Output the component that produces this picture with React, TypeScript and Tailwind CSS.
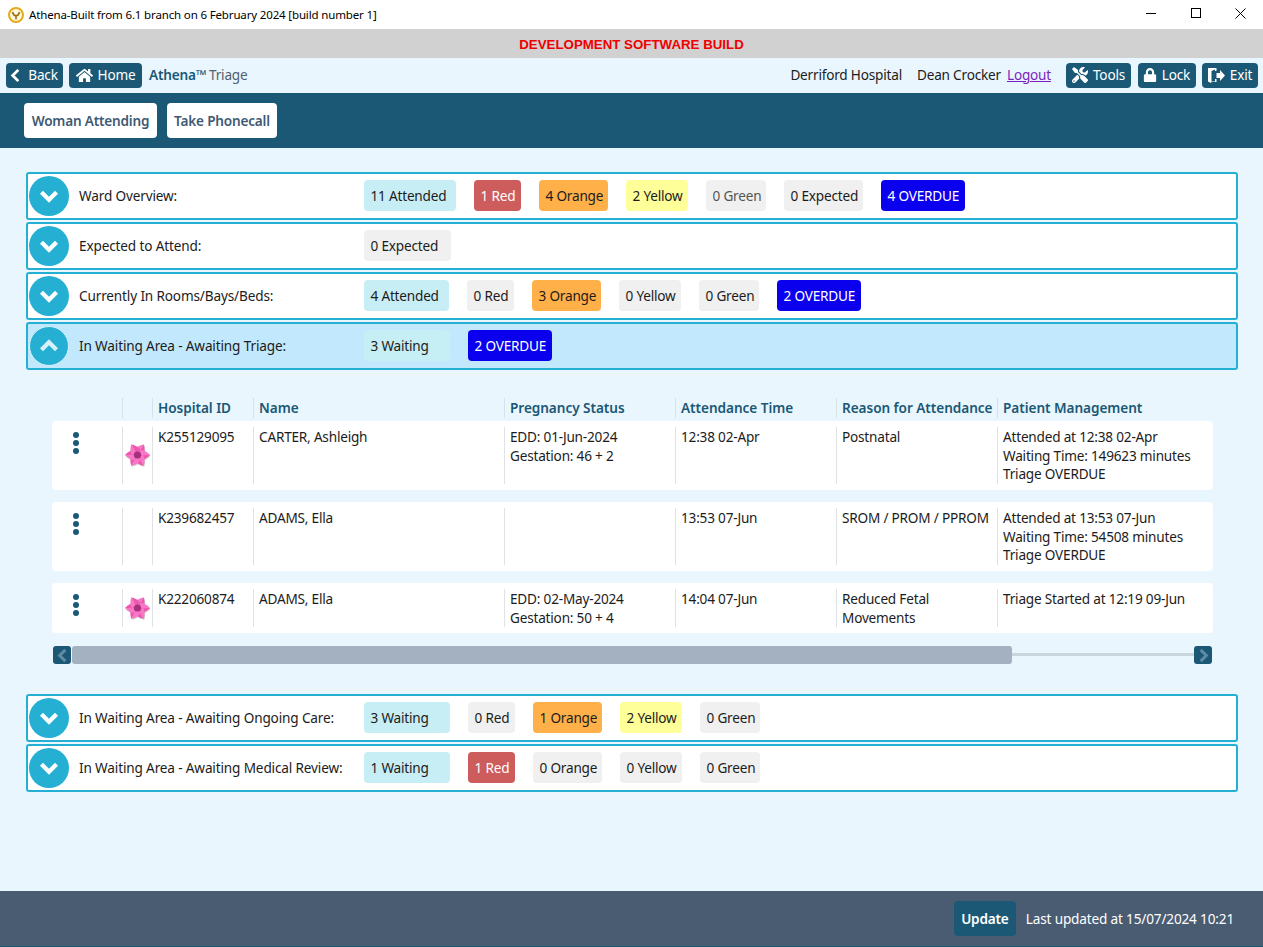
import React from 'react';
import { FaHome, FaTools, FaLock } from 'react-icons/fa';

type ChipKind = 'teal' | 'red' | 'orange' | 'yellow' | 'grey' | 'blue' | 'faint' | 'mint';

interface Chip {
  label: string;
  kind: ChipKind;
  width: string;
}

const chipStyles: Record<ChipKind, string> = {
  teal: 'bg-[#c8eef5] text-[#1c1c1c]',
  mint: 'bg-[#c6eef5] text-[#1c1c1c]',
  red: 'bg-[#cd5c5c] text-white',
  orange: 'bg-[#ffb048] text-[#1c1c1c]',
  yellow: 'bg-[#ffff99] text-[#1c1c1c]',
  grey: 'bg-[#f0f0f0] text-[#1c1c1c]',
  faint: 'bg-[#f0f0f0] text-[#555555]',
  blue: 'bg-[#0a00ee] text-white',
};

const Chevron = ({ dir, size, weight = 3.4 }: { dir: 'up' | 'down' | 'left' | 'right'; size: number; weight?: number }) => {
  const points = {
    up: 'M2 11L8 5L14 11',
    down: 'M2 5L8 11L14 5',
    left: 'M11 2L5 8L11 14',
    right: 'M5 2L11 8L5 14',
  }[dir];
  return (
    <svg width={size} height={size} viewBox="0 0 16 16" fill="none" stroke="currentColor" strokeWidth={weight}>
      <path d={points} />
    </svg>
  );
};

const StatusChip = ({ chip }: { chip: Chip }) => (
  <span className={`flex h-[31px] items-center rounded-[4px] pl-[6.500px] pt-[1px] whitespace-nowrap ${chip.width} ${chipStyles[chip.kind]}`}>
    {chip.label}
  </span>
);

const AccordionRow = ({ title, chips, open }: { title: string; chips: Chip[]; open?: boolean }) => (
  <div className={`flex h-[48px] items-center rounded-[3px] border-2 border-[#25b0d3] pl-[1px] ${open ? 'bg-[#c1e8fc]' : 'bg-white'}`}>
    <span className={`flex h-[40px] w-[40px] shrink-0 items-center justify-center rounded-full bg-[#25b0d3] ${open ? 'border border-[#d8f0fa] text-[#d8f0fa]' : 'text-white'}`}>
      <Chevron dir={open ? 'up' : 'down'} size={20} />
    </span>
    <span className="ml-[10px] w-[285px] shrink-0 tracking-[-0.15px] text-[#1c1c1c]">{title}</span>
    <div className="mb-[1px] flex items-center gap-[18px]">
      {chips.map((chip) => (
        <StatusChip key={chip.label} chip={chip} />
      ))}
    </div>
  </div>
);

const NavButton = ({ icon, label, width }: { icon: React.ReactNode; label: string; width: string }) => (
  <button className={`flex h-[25px] items-center justify-center gap-[5px] rounded-[4px] pb-[1px] bg-[#1a5876] text-white ${width}`}>
    {icon}
    <span>{label}</span>
  </button>
);

const ExitIcon = () => (
  <svg width="17" height="15" viewBox="0 0 17 15" fill="white">
    <path d="M0 0h8.500v3H7V1.500L3.500 3v10.500H7V11h1.500v3H3.500L3 15l-3-1.500z" />
    <path d="M8.500 5H12V2l5 5.500-5 5.500v-3H8.500z" />
  </svg>
);

const AthenaLogo = () => (
  <svg width="16" height="16" viewBox="0 0 16 16" fill="none">
    <circle cx="8" cy="8" r="7" stroke="#e5ab1a" strokeWidth="2" fill="#fff8e0" />
    <path d="M4.500 5c.5 2.500 2 3.500 3.500 4v3.500M11.500 5C11 7.500 9.500 8.500 8 9" stroke="#9a7414" strokeWidth="1.600" />
  </svg>
);

const Flower = () => {
  const petals = [30, 90, 150, 210, 270, 330];
  return (
    <svg width="26" height="26" viewBox="0 0 26 26">
      <g transform="translate(13 14)" fill="#cfcfcf">
        {petals.map((a) => (
          <path key={a} d="M-5 -2.500Q-5 -8 0 -12.500Q5 -8 5 -2.500Z" transform={`rotate(${a})`} />
        ))}
      </g>
      <g transform="translate(12.500 13)">
        <circle r="6.500" fill="#f262b6" />
        {petals.map((a) => (
          <g key={a} transform={`rotate(${a})`}>
            <path d="M-5 -2.500Q-5 -8 0 -12.500L0 -2.500Z" fill="#f877c6" />
            <path d="M5 -2.500Q5 -8 0 -12.500L0 -2.500Z" fill="#ee58ae" />
          </g>
        ))}
        <circle r="3.600" fill="#a82f7e" />
      </g>
    </svg>
  );
};

const KebabDots = () => (
  <div className="flex flex-col gap-[2.500px]">
    <span className="h-[5.500px] w-[5.500px] rounded-full bg-[#1a5876]" />
    <span className="h-[5.500px] w-[5.500px] rounded-full bg-[#1a5876]" />
    <span className="h-[5.500px] w-[5.500px] rounded-full bg-[#1a5876]" />
  </div>
);

const gridCols = 'grid grid-cols-[70px_30px_101px_251px_171px_161px_161px_216px]';

const headers = ['', '', 'Hospital ID', 'Name', 'Pregnancy Status', 'Attendance Time', 'Reason for Attendance', 'Patient Management'];

interface Patient {
  id: string;
  name: string;
  flower: boolean;
  pregnancy: string[];
  time: string;
  reason: string[];
  management: string[];
  height: string;
}

const patients: Patient[] = [
  {
    id: 'K255129095',
    name: 'CARTER, Ashleigh',
    flower: true,
    pregnancy: ['EDD: 01-Jun-2024', 'Gestation: 46 + 2'],
    time: '12:38 02-Apr',
    reason: ['Postnatal'],
    management: ['Attended at 12:38 02-Apr', 'Waiting Time: 149623 minutes', 'Triage OVERDUE'],
    height: 'h-[57px]',
  },
  {
    id: 'K239682457',
    name: 'ADAMS, Ella',
    flower: false,
    pregnancy: [],
    time: '13:53 07-Jun',
    reason: ['SROM / PROM / PPROM'],
    management: ['Attended at 13:53 07-Jun', 'Waiting Time: 54508 minutes', 'Triage OVERDUE'],
    height: 'h-[57px]',
  },
  {
    id: 'K222060874',
    name: 'ADAMS, Ella',
    flower: true,
    pregnancy: ['EDD: 02-May-2024', 'Gestation: 50 + 4'],
    time: '14:04 07-Jun',
    reason: ['Reduced Fetal', 'Movements'],
    management: ['Triage Started at 12:19 09-Jun'],
    height: 'h-[38px]',
  },
];

const Cell = ({ lines, height }: { lines: string[]; height: string }) => (
  <div className={`border-l border-[#dfe3e6] pl-[5px] pr-1 pt-[1px] whitespace-nowrap leading-[18.700px] ${height}`}>
    {lines.map((line) => (
      <div key={line}>{line}</div>
    ))}
  </div>
);

const PatientRow = ({ patient }: { patient: Patient }) => (
  <div className={`${gridCols} rounded-[4px] bg-white py-[6px] text-[#1c1c1c]`}>
    <div className={`pl-[21px] pt-[5px] ${patient.height}`}>
      <KebabDots />
    </div>
    <div className={`flex items-center justify-center border-l border-[#dfe3e6] pb-[1px] ${patient.height}`}>
      {patient.flower && <Flower />}
    </div>
    <Cell lines={[patient.id]} height={patient.height} />
    <Cell lines={[patient.name]} height={patient.height} />
    <Cell lines={patient.pregnancy} height={patient.height} />
    <Cell lines={[patient.time]} height={patient.height} />
    <Cell lines={patient.reason} height={patient.height} />
    <Cell lines={patient.management} height={patient.height} />
  </div>
);

const App = () => (
  <div className="flex h-[947px] w-[1263px] flex-col overflow-hidden bg-[#e9f6fe] text-[13.600px] font-['Noto_Sans','Open_Sans',sans-serif] tracking-[-0.2px]">
    {/* window chrome */}
    <div className="flex h-[29px] shrink-0 items-center bg-white pl-[8px] text-[11.500px] tracking-[-0.150px] text-black">
      <AthenaLogo />
      <span className="ml-[5px]">Athena-Built from 6.1 branch on 6 February 2024 [build number 1]</span>
      <div className="ml-auto flex items-center pb-[3px]">
        <span className="flex w-[45px] justify-center"><span className="h-px w-[10px] bg-black" /></span>
        <span className="flex w-[45px] justify-center"><span className="h-[10px] w-[10px] border border-black" /></span>
        <span className="flex w-[45px] justify-center">
          <svg width="11" height="11" viewBox="0 0 11 11" stroke="black" strokeWidth="1"><path d="M0.500 0.500l10 10M10.500 0.500l-10 10" /></svg>
        </span>
      </div>
    </div>

    <div className="flex h-[29px] shrink-0 items-center justify-center bg-[#d1d1d1] pt-[2px] text-[13.300px] font-bold tracking-normal text-[#f00000] font-['Liberation_Sans',sans-serif]">
      DEVELOPMENT SOFTWARE BUILD
    </div>

    {/* nav */}
    <div className="flex h-[35px] shrink-0 items-center pl-[6px] pr-[5px]">
      <NavButton icon={<Chevron dir="left" size={15} weight={3} />} label="Back" width="w-[57px] gap-[3px] pr-[3px]" />
      <div className="ml-[6px]">
        <NavButton icon={<FaHome size={17} />} label="Home" width="w-[73px]" />
      </div>
      <span className="ml-[7px] pb-[1px] font-semibold text-[#1a5876]">Athena™</span>
      <span className="ml-[3px] pb-[1px] text-[#51606f]">Triage</span>
      <span className="ml-auto pb-[1px] text-[#1c1c1c]">Derriford Hospital</span>
      <span className="ml-[15px] pb-[1px] text-[#1c1c1c]">Dean Crocker</span>
      <a className="ml-[6px] pb-[1px] text-[#7b1fc0] underline">Logout</a>
      <div className="ml-[15px] flex gap-[6.500px]">
        <NavButton icon={<FaTools size={16} />} label="Tools" width="w-[65px]" />
        <NavButton icon={<FaLock size={14} />} label="Lock" width="w-[58px]" />
        <NavButton icon={<ExitIcon />} label="Exit" width="w-[56px]" />
      </div>
    </div>

    {/* action bar */}
    <div className="flex h-[55px] shrink-0 items-center gap-[10px] bg-[#1a5876] pl-[24px]">
      <button className="h-[35px] w-[133px] rounded-[4px] bg-white pt-[1px] font-semibold text-[#3f5a72]">Woman Attending</button>
      <button className="h-[35px] w-[110px] rounded-[4px] bg-white pt-[1px] font-semibold text-[#3f5a72]">Take Phonecall</button>
    </div>

    {/* main */}
    <div className="flex min-h-0 flex-1 flex-col pl-[26px] pr-[25px] pt-[24px]">
      <div className="flex flex-col gap-[2px]">
        <AccordionRow
          title="Ward Overview:"
          chips={[
            { label: '11 Attended', kind: 'teal', width: 'w-[92px]' },
            { label: '1 Red', kind: 'red', width: 'w-[47px]' },
            { label: '4 Orange', kind: 'orange', width: 'w-[69px]' },
            { label: '2 Yellow', kind: 'yellow', width: 'w-[62px]' },
            { label: '0 Green', kind: 'faint', width: 'w-[60px]' },
            { label: '0 Expected', kind: 'grey', width: 'w-[79px]' },
            { label: '4 OVERDUE', kind: 'blue', width: 'w-[84px]' },
          ]}
        />
        <AccordionRow title="Expected to Attend:" chips={[{ label: '0 Expected', kind: 'grey', width: 'w-[87px]' }]} />
        <AccordionRow
          title="Currently In Rooms/Bays/Beds:"
          chips={[
            { label: '4 Attended', kind: 'teal', width: 'w-[85px]' },
            { label: '0 Red', kind: 'grey', width: 'w-[47px]' },
            { label: '3 Orange', kind: 'orange', width: 'w-[69px]' },
            { label: '0 Yellow', kind: 'grey', width: 'w-[62px]' },
            { label: '0 Green', kind: 'grey', width: 'w-[60px]' },
            { label: '2 OVERDUE', kind: 'blue', width: 'w-[84px]' },
          ]}
        />
        <AccordionRow
          open
          title="In Waiting Area - Awaiting Triage:"
          chips={[
            { label: '3 Waiting', kind: 'mint', width: 'w-[86px]' },
            { label: '2 OVERDUE', kind: 'blue', width: 'w-[84px]' },
          ]}
        />
      </div>

      {/* triage table */}
      <div className="mx-[26px] mt-[28px] w-[1161px]">
        <div className={`${gridCols} h-[20px] font-semibold leading-[20px] tracking-[-0.05px] text-[#1a5876]`}>
          {headers.map((header, i) => (
            <div key={i} className={`whitespace-nowrap pl-[5px] ${i > 0 ? 'border-l border-[#d5e2ea]' : ''}`}>
              {header}
            </div>
          ))}
        </div>
        <div className="mt-[3px] flex flex-col gap-[12px]">
          {patients.map((patient) => (
            <PatientRow key={patient.id} patient={patient} />
          ))}
        </div>

        {/* horizontal scrollbar */}
        <div className="mt-[13px] flex h-[18px] items-center pl-[1px] pr-[1px]">
          <span className="flex h-[18px] w-[18px] items-center justify-center rounded-[3px] bg-[#1a5876] text-[#5f8ba3]">
            <Chevron dir="left" size={15} weight={3.2} />
          </span>
          <span className="ml-[1px] h-[18px] w-[940px] rounded-[3px] bg-[#a4b1c1]" />
          <span className="mb-[1px] h-[3px] flex-1 bg-[#c9d4de]" />
          <span className="flex h-[18px] w-[18px] items-center justify-center rounded-[3px] bg-[#1a5876] text-[#5f8ba3]">
            <Chevron dir="right" size={15} weight={3.2} />
          </span>
        </div>
      </div>

      <div className="mt-[30px] flex flex-col gap-[2px]">
        <AccordionRow
          title="In Waiting Area - Awaiting Ongoing Care:"
          chips={[
            { label: '3 Waiting', kind: 'teal', width: 'w-[86px]' },
            { label: '0 Red', kind: 'grey', width: 'w-[47px]' },
            { label: '1 Orange', kind: 'orange', width: 'w-[69px]' },
            { label: '2 Yellow', kind: 'yellow', width: 'w-[62px]' },
            { label: '0 Green', kind: 'grey', width: 'w-[60px]' },
          ]}
        />
        <AccordionRow
          title="In Waiting Area - Awaiting Medical Review:"
          chips={[
            { label: '1 Waiting', kind: 'teal', width: 'w-[86px]' },
            { label: '1 Red', kind: 'red', width: 'w-[47px]' },
            { label: '0 Orange', kind: 'grey', width: 'w-[69px]' },
            { label: '0 Yellow', kind: 'grey', width: 'w-[62px]' },
            { label: '0 Green', kind: 'grey', width: 'w-[60px]' },
          ]}
        />
      </div>
    </div>

    {/* footer */}
    <div className="flex h-[56px] shrink-0 items-center justify-end border-b border-[#1a5876] bg-[#4a5c72] pr-[29px] text-white">
      <button className="h-[35px] w-[62px] rounded-[4px] bg-[#1a5876] pt-[1px] font-semibold">Update</button>
      <span className="ml-[10px] pt-[1px] tracking-[-0.17px]">Last updated at 15/07/2024 10:21</span>
    </div>
  </div>
);

export default App;
